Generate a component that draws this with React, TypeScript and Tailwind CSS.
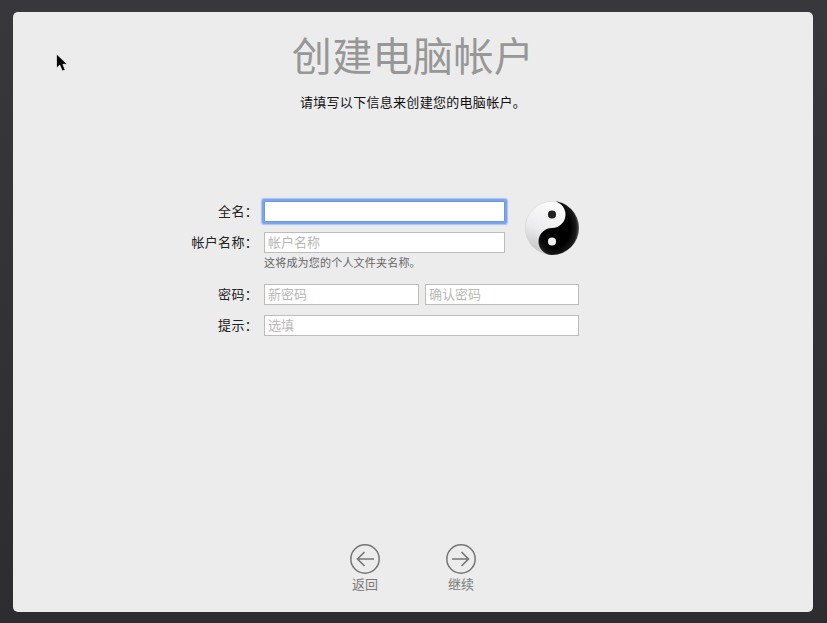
const cjk = "font-['Liberation_Sans','Noto_Sans_CJK_SC',sans-serif]";

function YinYang() {
  return (
    <svg viewBox="0 0 100 100" className="h-[54px] w-[54px]">
      <defs>
        <linearGradient id="light" x1="0.7" y1="0" x2="0.3" y2="1">
          <stop offset="0" stopColor="#ffffff" />
          <stop offset="0.6" stopColor="#ececee" />
          <stop offset="1" stopColor="#c4c4c8" />
        </linearGradient>
        <radialGradient id="dark" cx="0.42" cy="0.5" r="0.6">
          <stop offset="0.6" stopColor="#000000" />
          <stop offset="0.85" stopColor="#1a1a1a" />
          <stop offset="1" stopColor="#707070" />
        </radialGradient>
      </defs>
      <circle cx="50" cy="50" r="49.5" fill="url(#light)" stroke="#cfcfcf" strokeWidth="1" />
      <path d="M50 0 A50 50 0 0 1 50 100 A25 25 0 0 1 50 50 A25 25 0 0 0 50 0 Z" fill="url(#dark)" />
      <circle cx="50" cy="25" r="7.5" fill="#222222" />
      <circle cx="50" cy="75" r="7.5" fill="#f0f0f0" />
    </svg>
  );
}

function Cursor() {
  return (
    <svg viewBox="0 0 14 20" className="absolute left-[42px] top-[41px] h-[20px] w-[14px]">
      <path d="M1.5 1 V15 L4.8 12 L7.3 18 L10.2 17 L7.8 11.3 H12.2 Z" fill="#000" stroke="#f4f4f4" strokeWidth="0.7" strokeLinejoin="round" />
    </svg>
  );
}

function NavButton({ label, back }: { label: string; back?: boolean }) {
  return (
    <div className="flex w-[60px] flex-col items-center">
      <svg viewBox="0 0 30 30" className="h-[30px] w-[30px]" fill="none" stroke="#757575">
        <circle cx="15" cy="15" r="14.2" strokeWidth="1.5" />
        {back ? (
          <path d="M24 15 H7.5 M14.5 8 L7.5 15 L14.5 22" strokeWidth="1.6" />
        ) : (
          <path d="M6 15 H22.5 M15.5 8 L22.5 15 L15.5 22" strokeWidth="1.6" />
        )}
      </svg>
      <span className="mt-[2px] text-[13px] leading-[18px] text-[#7a7a7a]">{label}</span>
    </div>
  );
}

function Field({ placeholder, focus, className }: { placeholder?: string; focus?: boolean; className?: string }) {
  return (
    <input
      placeholder={placeholder}
      className={
        "h-[21px] min-w-0 bg-white px-[3px] text-[13px] outline-none placeholder:text-[#b8b8b8] " +
        (focus
          ? "rounded-[1px] border border-[#6f98dc] shadow-[0_0_0_2px_#7ba4ee,0_0_1px_3px_#a9c4f0] "
          : "border border-[#bdbdbd] ") +
        (className ?? "")
      }
    />
  );
}

function Label({ children }: { children: string }) {
  return <label className="w-[78px] whitespace-nowrap text-right text-[13px] leading-[21px] tracking-[0.3px] text-[#222]">{children}</label>;
}

export default function App() {
  return (
    <div className={`h-screen w-full overflow-hidden bg-gradient-to-b from-[#37373c] to-[#2d2c31] pl-[13px] pt-[12px] ${cjk}`}>
      <div className="relative flex h-[600px] w-[800px] flex-col items-center rounded-[5px] bg-[#ececec]">
        <Cursor />

        <h1 className="mt-[25px] text-[40px] font-normal leading-[40px] tracking-[0.4px] text-[#979797]">创建电脑帐户</h1>
        <p className="mt-[17px] text-[13px] leading-[18px] tracking-[0.3px] text-[#111]">请填写以下信息来创建您的电脑帐户。</p>

        {/* form */}
        <div className="ml-[167px] mt-[89px] flex w-[399px] flex-col self-start">
          <div className="flex">
            <div className="flex w-[325px] flex-col">
              <div className="flex items-center gap-[6px]">
                <Label>全名：</Label>
                <Field focus className="w-[241px]" />
              </div>
              <div className="mt-[10px] flex items-center gap-[6px]">
                <Label>帐户名称：</Label>
                <Field placeholder="帐户名称" className="w-[241px]" />
              </div>
              <p className="ml-[84px] mt-[2px] text-[11px] leading-[16px] tracking-[0.2px] text-[#666]">这将成为您的个人文件夹名称。</p>
            </div>
            <div className="ml-[20px]">
              <YinYang />
            </div>
          </div>

          <div className="mt-[13px] flex items-center gap-[6px]">
            <Label>密码：</Label>
            <div className="flex gap-[6px]">
              <Field placeholder="新密码" className="w-[155px]" />
              <Field placeholder="确认密码" className="w-[154px]" />
            </div>
          </div>
          <div className="mt-[10px] flex items-center gap-[6px]">
            <Label>提示：</Label>
            <Field placeholder="选填" className="w-[315px]" />
          </div>
        </div>

        {/* bottom nav */}
        <div className="mb-[18px] mt-auto flex gap-[36px]">
          <NavButton label="返回" back />
          <NavButton label="继续" />
        </div>
      </div>
    </div>
  );
}
